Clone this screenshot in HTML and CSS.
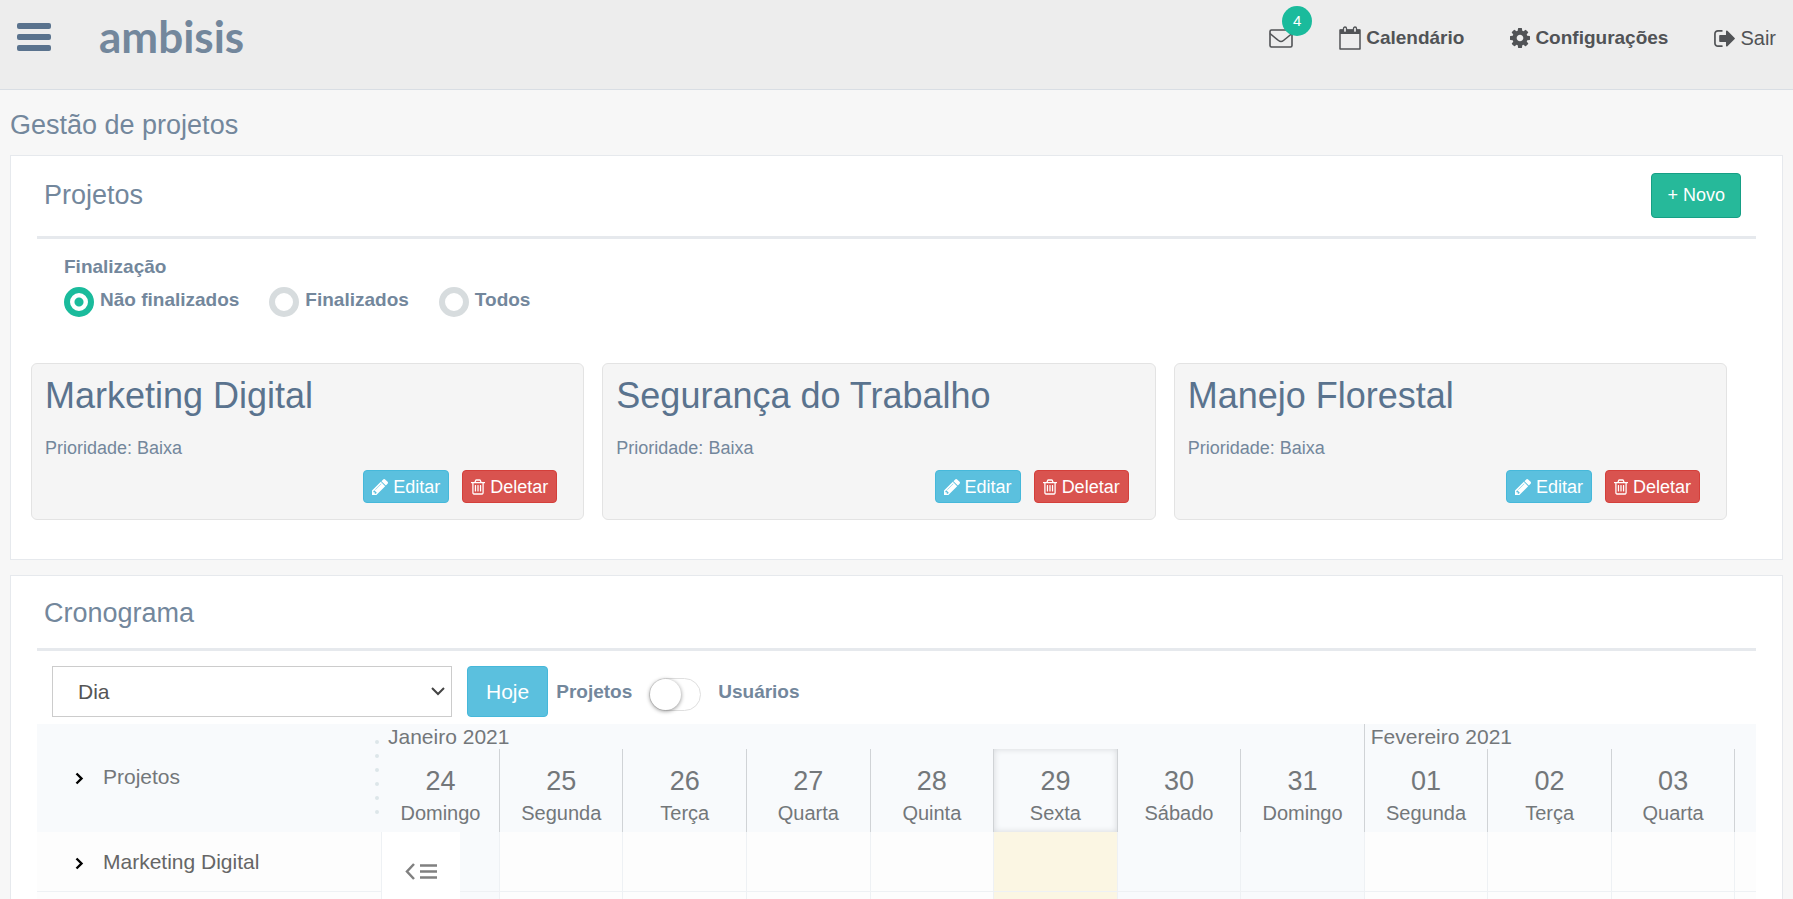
FILE: index.html
```html
<!DOCTYPE html>
<html lang="pt-BR">
<head>
<meta charset="utf-8">
<title>Gestão de projetos</title>
<link rel="stylesheet" href="styles.css">
</head>
<body>
<svg class="sprite" aria-hidden="true">
  <symbol id="cog" viewBox="128 128 1536 1536"><path d="M1152 896q0-106-75-181t-181-75-181 75-75 181 75 181 181 75 181-75 75-181zm512-109v222q0 12-8 23t-20 13l-185 28q-19 54-39 91 35 50 107 138 10 12 10 25t-9 23q-27 37-99 108t-94 71q-12 0-26-9l-138-108q-44 23-91 38-16 136-29 186-7 28-36 28h-222q-14 0-24.500-8.500t-11.500-21.500l-28-184q-49-16-90-37l-141 107q-10 9-25 9-14 0-25-11-126-114-165-168-7-10-7-23 0-12 8-23 15-21 51-66.500t54-70.500q-27-50-41-99l-183-27q-13-2-21-12.500t-8-23.500v-222q0-12 8-23t19-13l186-28q14-46 39-92-40-57-107-138-10-12-10-24 0-10 9-23 26-36 98.500-107.500t94.500-71.500q13 0 26 10l138 107q44-23 91-38 16-136 29-186 7-28 36-28h222q14 0 24.500 8.500t11.500 21.500l28 184q49 16 90 37l142-107q9-9 24-9 13 0 25 10 129 119 165 170 7 8 7 22 0 12-8 23-15 21-51 66.500t-54 70.500q26 50 41 98l183 28q13 2 21 12.500t8 23.500z"/></symbol>
  <symbol id="exit" viewBox="64 256 1568 1280"><path d="M704 1440q0 4 1 20t.5 26.500-3 23.500-10 19.500-20.500 6.500h-320q-119 0-203.500-84.500t-84.500-203.500v-704q0-119 84.500-203.500t203.500-84.500h320q13 0 22.500 9.500t9.500 22.500q0 4 1 20t.5 26.500-3 23.500-10 19.500-20.500 6.500h-320q-66 0-113 47t-47 113v704q0 66 47 113t113 47h312l11.500 1 11.500 3 8 5.500 7 9 2 13.500zm928-544q0 26-19 45l-544 544q-19 19-45 19t-45-19-19-45v-288h-448q-26 0-45-19t-19-45v-384q0-26 19-45t45-19h448v-288q0-26 19-45t45-19 45 19l544 544q19 19 19 45z"/></symbol>
  <symbol id="pencil" viewBox="128 150 1515 1515"><path d="M491 1536l91-91-235-235-91 91v107h128v128h107zm523-928q0-22-22-22-10 0-17 7l-542 542q-7 7-7 17 0 22 22 22 10 0 17-7l542-542q7-7 7-17zm-54-192l416 416-832 832h-416v-416zm683 96q0 53-37 90l-166 166-416-416 166-165q36-38 90-38 53 0 91 38l235 234q37 39 37 91z"/></symbol>
  <symbol id="trash" viewBox="192 128 1408 1536"><path d="M704 736v576q0 14-9 23t-23 9h-64q-14 0-23-9t-9-23v-576q0-14 9-23t23-9h64q14 0 23 9t9 23zm256 0v576q0 14-9 23t-23 9h-64q-14 0-23-9t-9-23v-576q0-14 9-23t23-9h64q14 0 23 9t9 23zm256 0v576q0 14-9 23t-23 9h-64q-14 0-23-9t-9-23v-576q0-14 9-23t23-9h64q14 0 23 9t9 23zm128 724v-948h-896v948q0 22 7 40.500t14.500 27 10.500 8.500h832q3 0 10.500-8.500t14.500-27 7-40.500zm-672-1076h448l-48-117q-7-9-17-11h-317q-10 2-17 11zm928 32v64q0 14-9 23t-23 9h-96v948q0 83-47 143.500t-113 60.500h-832q-66 0-113-58.500t-47-141.500v-952h-96q-14 0-23-9t-9-23v-64q0-14 9-23t23-9h309l70-167q15-37 54-63t79-26h320q40 0 79 26t54 63l70 167h309q14 0 23 9t9 23z"/></symbol>
  <symbol id="chevron" viewBox="0 0 9 13"><path d="M1.500 1.500l5 5-5 5" fill="none" stroke="currentColor" stroke-width="2.400"/></symbol>
</svg>

<header class="topbar">
  <button class="menu" aria-label="Menu"><span></span><span></span><span></span></button>
  <a class="logo" href="#">ambisis</a>
  <nav class="nav">
    <a class="mail" href="#" aria-label="Mensagens">
      <svg width="24" height="19" viewBox="0 0 24 19"><g fill="none" stroke="currentColor" stroke-width="1.600"><rect x="1" y="1" width="22" height="17" rx="1.500"/><path d="M1 4.500c3 2.500 6 5 8.500 7 1.500 1.200 3.500 1.200 5 0C17 9.500 20 7 23 4.500"/></g></svg>
      <span class="badge">4</span>
    </a>
    <a class="strong" href="#"><svg width="22" height="24" viewBox="0 0 22 24"><path d="M1 4h20v19H1z" fill="none" stroke="currentColor" stroke-width="1.500" stroke-linejoin="round"/><path d="M1 3.500h20V8H1z"/><rect x="4.500" y="1" width="3" height="5.500" rx="1.500" fill="#ededed" stroke="currentColor" stroke-width="1.300"/><rect x="14.500" y="1" width="3" height="5.500" rx="1.500" fill="#ededed" stroke="currentColor" stroke-width="1.300"/></svg>Calendário</a>
    <a class="strong" href="#"><svg width="20" height="20"><use href="#cog"/></svg>Configurações</a>
    <a href="#"><svg width="21" height="17"><use href="#exit"/></svg>Sair</a>
  </nav>
</header>

<main class="page">
  <h1>Gestão de projetos</h1>

  <section class="panel projects">
    <div class="panel-head"><h2>Projetos</h2><button class="btn new">+ Novo</button></div>
    <fieldset class="filter">
      <legend>Finalização</legend>
      <label><input type="radio" name="fim" checked>Não finalizados</label>
      <label><input type="radio" name="fim">Finalizados</label>
      <label><input type="radio" name="fim">Todos</label>
    </fieldset>
    <div class="cards">
      <article class="card"><h3>Marketing Digital</h3><p>Prioridade: Baixa</p><div class="actions"><button class="btn info"><svg width="16" height="16"><use href="#pencil"/></svg>Editar</button><button class="btn danger"><svg width="14" height="16"><use href="#trash"/></svg>Deletar</button></div></article>
      <article class="card"><h3>Segurança do Trabalho</h3><p>Prioridade: Baixa</p><div class="actions"><button class="btn info"><svg width="16" height="16"><use href="#pencil"/></svg>Editar</button><button class="btn danger"><svg width="14" height="16"><use href="#trash"/></svg>Deletar</button></div></article>
      <article class="card"><h3>Manejo Florestal</h3><p>Prioridade: Baixa</p><div class="actions"><button class="btn info"><svg width="16" height="16"><use href="#pencil"/></svg>Editar</button><button class="btn danger"><svg width="14" height="16"><use href="#trash"/></svg>Deletar</button></div></article>
    </div>
  </section>

  <section class="panel schedule">
    <div class="panel-head"><h2>Cronograma</h2></div>
    <div class="tools">
      <div class="picker">
        <select aria-label="Escala"><option>Dia</option></select>
        <svg width="14" height="9" viewBox="0 0 14 9"><path d="M1 1l6 6 6-6" fill="none" stroke="currentColor" stroke-width="2"/></svg>
      </div>
      <button class="btn info today-btn">Hoje</button>
      <label class="switch"><span>Projetos</span><input type="checkbox"><span>Usuários</span></label>
    </div>

    <div class="timeline">
      <div class="side head"><svg width="9" height="13"><use href="#chevron"/></svg>Projetos<span class="grip"><i></i><i></i><i></i><i></i><i></i><i></i></span></div>
      <div class="calendar">
        <div class="months"><span class="month jan">Janeiro 2021</span><span class="month fev">Fevereiro 2021</span></div>
        <div class="days">
          <div class="day"><b>24</b>Domingo</div>
          <div class="day"><b>25</b>Segunda</div>
          <div class="day"><b>26</b>Terça</div>
          <div class="day"><b>27</b>Quarta</div>
          <div class="day"><b>28</b>Quinta</div>
          <div class="day now"><b>29</b>Sexta</div>
          <div class="day"><b>30</b>Sábado</div>
          <div class="day"><b>31</b>Domingo</div>
          <div class="day"><b>01</b>Segunda</div>
          <div class="day"><b>02</b>Terça</div>
          <div class="day"><b>03</b>Quarta</div>
          <div class="rest"></div>
        </div>
      </div>
      <div class="side"><svg width="9" height="13"><use href="#chevron"/></svg>Marketing Digital</div>
      <div class="cells">
        <span class="off"></span><span></span><span></span><span></span><span></span><span class="today"></span><span class="off"></span><span class="off"></span><span></span><span></span><span></span><span class="rest"></span>
        <button class="collapse" aria-label="Recolher"><svg width="34" height="17" viewBox="0 0 34 17"><g fill="none" stroke="currentColor" stroke-width="2.500"><path d="M10 1L3 8.500 10 16"/><path d="M16 2.500h17M16 8.500h17M16 14.500h17"/></g></svg></button>
      </div>
      <div class="side"></div>
      <div class="cells">
        <span class="off"></span><span></span><span></span><span></span><span></span><span class="today"></span><span class="off"></span><span class="off"></span><span></span><span></span><span></span><span class="rest"></span>
      </div>
    </div>
  </section>
</main>
</body>
</html>
```

FILE: styles.css
```css
* { box-sizing: border-box; }
html, body { height: 100%; overflow: hidden; }
body {
  margin: 0;
  background: #f7f7f7;
  color: #73879c;
  font: 20px/28px "Liberation Sans", Arial, sans-serif;
}
h1, h2, h3, p, fieldset { margin: 0; font-weight: 400; }
a { color: inherit; text-decoration: none; }
button, select { font: inherit; color: inherit; }
svg { fill: currentColor; flex: none; }
.sprite { position: absolute; width: 0; height: 0; }

/* top bar */
.topbar {
  display: flex;
  align-items: flex-start;
  height: 90px;
  padding: 0 17px;
  background: #ededed;
  border-bottom: 1px solid #d9dee4;
}
.menu {
  display: flex;
  flex-direction: column;
  gap: 5px;
  margin-top: 23px;
  padding: 0;
  border: 0;
  background: none;
}
.menu span { width: 34px; height: 6px; border-radius: 2px; background: #5a738e; }
.logo {
  margin: 10px 0 0 48px;
  font: 700 44px/52px Lato, sans-serif;
}
.nav { display: flex; margin: 24px 0 0 auto; color: #515356; }
.nav a { display: flex; align-items: center; gap: 5px; margin-left: 46px; }
.nav .strong { font-size: 19px; font-weight: 700; }
.nav .mail { position: relative; margin: 0; }
.badge {
  position: absolute;
  left: 13px;
  top: -18px;
  width: 30px;
  height: 30px;
  border-radius: 50%;
  background: #1abb9c;
  color: #fff;
  font-size: 15px;
  line-height: 30px;
  text-align: center;
}

/* panels */
.page { padding: 16px 10px 0; }
h1 { padding-bottom: 11px; font-size: 27px; line-height: 38px; }
.panel {
  margin-bottom: 15px;
  padding: 0 26px;
  background: #fff;
  border: 1px solid #e6e9ed;
}
.panel-head {
  display: flex;
  align-items: center;
  justify-content: space-between;
  height: 83px;
  padding: 0 15px 2px 7px;
  border-bottom: 3px solid #e6e9ed;
}
h2 { font-size: 27px; line-height: 36px; }
.btn {
  display: flex;
  align-items: center;
  justify-content: center;
  gap: 5px;
  height: 33px;
  padding: 0 8px;
  border: 1px solid;
  border-radius: 4px;
  color: #fff;
  font-size: 18px;
}
.new { height: 45px; padding: 0 15px; background: #26b99a; border-color: #169f85; }
.info { background: #5bc0de; border-color: #46b8da; }
.danger { background: #d9534f; border-color: #d43f3a; }

.filter { display: flex; flex-wrap: wrap; gap: 0 30px; padding: 14px 27px 45px; border: 0; font-size: 19px; font-weight: 700; }
.filter legend { float: left; width: 100%; padding: 0; }
.filter label { display: flex; align-items: center; gap: 6px; height: 37px; line-height: 34px; }
.filter input {
  appearance: none;
  width: 30px;
  height: 30px;
  margin: 5px 0 0;
  border: 6px solid #d7dcde;
  border-radius: 50%;
}
.filter input:checked { border-color: #1abb9c; background: radial-gradient(circle, #1abb9c 4px, #fff 5px); }

.cards {
  display: grid;
  grid-template-columns: repeat(3, 1fr);
  gap: 18px;
  margin: 0 29px 39px -6px;
}
.card { padding: 8px 26px 16px 13px; background: #f5f5f5; border: 1px solid #e3e3e3; border-radius: 6px; }
h3 { color: #5a738e; font-size: 36px; line-height: 48px; }
.card p { padding: 14px 0 8px; font-size: 18px; }
.actions { display: flex; justify-content: flex-end; gap: 13px; }

/* schedule */
.schedule .panel-head { height: 75px; padding-top: 4px; }
.tools { display: flex; align-items: center; padding: 15px 15px 7px; font-size: 21px; }
.picker { display: flex; align-items: center; position: relative; width: 400px; }
.picker select {
  appearance: none;
  width: 100%;
  height: 51px;
  padding: 0 25px;
  border: 1px solid #ccc;
  border-radius: 0;
  background: #fff;
  color: #555;
}
.picker svg { position: absolute; right: 7px; color: #444; pointer-events: none; }
.today-btn { height: 51px; margin: 0 8px 0 15px; padding: 0 18px; font-size: 21px; }
.switch { display: flex; align-items: center; gap: 17px; font-size: 19px; font-weight: 700; }
.switch input {
  appearance: none;
  width: 52px;
  height: 33px;
  margin: 5px 0 0;
  border: 1px solid #dfdfdf;
  border-radius: 17px;
  background: #fff;
}
.switch input::before {
  content: "";
  display: block;
  width: 31px;
  height: 31px;
  border-radius: 50%;
  background: #fff;
  box-shadow: 0 1px 4px rgba(0, 0, 0, .45);
}

.timeline {
  display: grid;
  grid-template-columns: 345px 1fr;
  color: #73777a;
}
.side {
  display: flex;
  align-items: center;
  gap: 19px;
  height: 60px;
  padding-left: 38px;
  background: #fdfdfd;
  border-right: 1px solid #eef1f4;
  border-bottom: 1px solid #eef1f4;
  color: #666;
  font-size: 21px;
}
.side svg { color: #000; margin-top: 3px; }
.head { height: 108px; padding-bottom: 2px; background: #f8fafc; border: 0; color: #73777a; }
.grip { display: flex; flex-direction: column; gap: 10px; margin: 0 3px 0 auto; }
.grip i { width: 4px; height: 4px; border-radius: 50%; background: #dde6e9; }
.calendar { background: #f8fafc; }
.months, .days, .cells {
  display: grid;
  grid-template-columns: 1180fr repeat(10, 1236fr) 206fr;
}
.months { font-size: 21px; line-height: 25px; height: 25px; }
.month { padding-left: 6px; }
.jan { grid-column: 1 / 9; border-right: 1px solid #d0d3d6; }
.fev { grid-column: 9 / -1; }
.day {
  height: 83px;
  padding-top: 15px;
  border-right: 1px solid #d0d3d6;
  text-align: center;
}
.day b { display: block; font-size: 27px; line-height: 35px; font-weight: 400; }
.now { box-shadow: inset 0 0 6px #d4d7da; }
.cells { position: relative; height: 60px; }
.cells span { background: #fdfdfd; border-right: 1px solid #eef1f4; border-bottom: 1px solid #eef1f4; }
.cells .off { background: #f8fafc; }
.cells .today { background: #fbf6e3; }
.cells .rest { border-right: 0; }
.collapse {
  position: absolute;
  z-index: 1;
  left: 0;
  top: 0;
  width: 78px;
  height: 76px;
  padding: 0;
  border: 0;
  background: #fff;
  color: #808080;
}
.collapse svg { vertical-align: middle; }
```
